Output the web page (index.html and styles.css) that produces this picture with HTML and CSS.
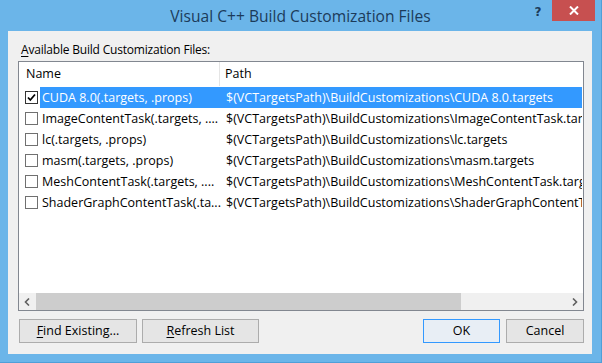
FILE: index.html
```html
<!DOCTYPE html>
<html>
<head>
<meta charset="utf-8">
<link rel="stylesheet" href="styles.css">
</head>
<body>
<div class="window">
  <div class="titlebar">
    <div class="title">Visual C++ Build Customization Files</div>
    <div class="controls">
      <span class="help">?</span>
      <span class="close"><svg width="10" height="9" viewBox="0 0 10 9"><path d="M1 0.5 L9 8.5 M9 0.5 L1 8.5" stroke="#fff" stroke-width="2"/></svg></span>
    </div>
  </div>
  <div class="client">
    <div class="label"><u>A</u>vailable Build Customization Files:</div>
    <div class="listbox">
      <div class="header">
        <div class="col-name">Name</div>
        <div class="col-path">Path</div>
      </div>
      <div class="rows">
        <div class="row selected">
          <span class="cb"><svg width="13" height="13" viewBox="0 0 13 13"><rect x="0.5" y="0.5" width="12" height="12" fill="#fff" stroke="#333"/><path d="M3 6.5 L5.3 9 L10 3.5" fill="none" stroke="#000" stroke-width="1.8"/></svg></span>
          <div class="sel">
            <span class="name">CUDA 8.0(.targets, .props)</span>
            <span class="path">$(VCTargetsPath)\BuildCustomizations\CUDA 8.0.targets</span>
          </div>
        </div>
        <div class="row">
          <span class="cb"><svg width="13" height="13" viewBox="0 0 13 13"><rect x="0.5" y="0.5" width="12" height="12" fill="#fff" stroke="#707070"/></svg></span>
          <div class="sel">
            <span class="name">ImageContentTask(.targets, ....</span>
            <span class="path">$(VCTargetsPath)\BuildCustomizations\ImageContentTask.targets</span>
          </div>
        </div>
        <div class="row">
          <span class="cb"><svg width="13" height="13" viewBox="0 0 13 13"><rect x="0.5" y="0.5" width="12" height="12" fill="#fff" stroke="#707070"/></svg></span>
          <div class="sel">
            <span class="name">lc(.targets, .props)</span>
            <span class="path">$(VCTargetsPath)\BuildCustomizations\lc.targets</span>
          </div>
        </div>
        <div class="row">
          <span class="cb"><svg width="13" height="13" viewBox="0 0 13 13"><rect x="0.5" y="0.5" width="12" height="12" fill="#fff" stroke="#707070"/></svg></span>
          <div class="sel">
            <span class="name">masm(.targets, .props)</span>
            <span class="path">$(VCTargetsPath)\BuildCustomizations\masm.targets</span>
          </div>
        </div>
        <div class="row">
          <span class="cb"><svg width="13" height="13" viewBox="0 0 13 13"><rect x="0.5" y="0.5" width="12" height="12" fill="#fff" stroke="#707070"/></svg></span>
          <div class="sel">
            <span class="name">MeshContentTask(.targets, ....</span>
            <span class="path">$(VCTargetsPath)\BuildCustomizations\MeshContentTask.targets</span>
          </div>
        </div>
        <div class="row">
          <span class="cb"><svg width="13" height="13" viewBox="0 0 13 13"><rect x="0.5" y="0.5" width="12" height="12" fill="#fff" stroke="#707070"/></svg></span>
          <div class="sel">
            <span class="name">ShaderGraphContentTask(.ta...</span>
            <span class="path">$(VCTargetsPath)\BuildCustomizations\ShaderGraphContentTask.targets</span>
          </div>
        </div>
      </div>
      <div class="hscroll">
        <span class="arrow"><svg width="7" height="8" viewBox="0 0 7 8"><path d="M5 0.5 L1.5 4 L5 7.5" fill="none" stroke="#606060" stroke-width="1.6"/></svg></span>
        <div class="track"><div class="thumb"></div></div>
        <span class="arrow"><svg width="7" height="8" viewBox="0 0 7 8"><path d="M2 0.5 L5.5 4 L2 7.5" fill="none" stroke="#606060" stroke-width="1.6"/></svg></span>
      </div>
    </div>
    <div class="buttons">
      <div class="btn find"><u>F</u>ind Existing...</div>
      <div class="btn refresh"><u>R</u>efresh List</div>
      <div class="spacer"></div>
      <div class="btn ok default">OK</div>
      <div class="btn cancel">Cancel</div>
    </div>
  </div>
</div>
</body>
</html>
```
FILE: styles.css
```css
html, body {
  margin: 0;
  padding: 0;
}
body {
  width: 602px;
  height: 363px;
  overflow: hidden;
  font-family: "Open Sans", "Noto Sans", sans-serif;
  font-size: 12px;
  color: #000;
}
.window {
  width: 602px;
  height: 363px;
  box-sizing: border-box;
  background: #6bb5e9;
  border-right: 1px solid #4f9fd8;
  border-bottom: 1px solid #4f9fd8;
  padding: 0 9px 8px 8px;
  display: flex;
  flex-direction: column;
}
.titlebar {
  height: 31px;
  display: flex;
  align-items: flex-start;
  margin: 0 -9px 0 -8px;
  padding-left: 74px;
}
.title {
  flex: 1;
  text-align: center;
  font-size: 15.6px;
  color: #1c3b5a;
  line-height: 33px;
}
.controls {
  width: 74px;
  display: flex;
  align-items: flex-start;
}
.help {
  width: 22px;
  font-family: "DejaVu Sans", sans-serif;
  font-weight: bold;
  font-size: 12px;
  color: #1c3b5a;
  text-align: center;
  padding-top: 5px;
  margin-left: 0;
  margin-right: 3px;
}
.close {
  width: 43px;
  height: 21px;
  background: #c75050;
  display: flex;
  align-items: center;
  justify-content: center;
}
.client {
  flex: 1;
  background: #f0f0f0;
  padding: 0 8px 0 10px;
  display: flex;
  flex-direction: column;
}
.label {
  height: 30px;
  line-height: 18px;
  padding-top: 10px;
  box-sizing: border-box;
  padding-left: 3px;
  letter-spacing: -0.2px;
}
.label u, .btn u {
  text-decoration-thickness: 1px;
  text-underline-offset: 2px;
}
.listbox {
  height: 250px;
  box-sizing: border-box;
  border: 1px solid #828790;
  background: #fff;
  display: flex;
  flex-direction: column;
  overflow: hidden;
}
.header {
  height: 24px;
  display: flex;
  flex: none;
  font-size: 12.5px;
}
.col-name {
  width: 201px;
  border-right: 1px solid #e5e5e5;
  padding-left: 7px;
  box-sizing: border-box;
  line-height: 24px;
}
.col-path {
  padding-left: 5px;
  line-height: 24px;
}
.rows {
  flex: 1;
  padding-top: 1px;
  font-size: 12.5px;
}
.row {
  height: 21px;
  display: flex;
  align-items: center;
  padding-left: 6px;
  white-space: nowrap;
}
.cb {
  width: 15px;
  height: 13px;
  flex: none;
  display: flex;
}
.sel {
  height: 21px;
  display: flex;
  align-items: center;
  width: 542px;
  overflow: hidden;
  padding-left: 2px;
  box-sizing: border-box;
}
.row.selected .sel {
  background: #3399ff;
  color: #fff;
}
.name {
  width: 184px;
  flex: none;
  overflow: hidden;
}
.path {
  flex: none;
}
.hscroll {
  height: 17px;
  flex: none;
  display: flex;
  background: #f0f0f0;
}
.arrow {
  width: 17px;
  height: 17px;
  display: flex;
  align-items: center;
  justify-content: center;
  flex: none;
}
.track {
  flex: 1;
  display: flex;
  align-items: stretch;
}
.thumb {
  width: 425px;
  background: #cdcdcd;
}
.buttons {
  display: flex;
  margin-top: 8px;
  padding-left: 1px;
  gap: 5px;
}
.btn {
  height: 24px;
  box-sizing: border-box;
  border: 1px solid #acacac;
  background: #e5e5e5;
  text-align: center;
  line-height: 22px;
  font-size: 12.5px;
}
.find { width: 118px; }
.refresh { width: 117px; }
.spacer { flex: 1; }
.ok { width: 77px; }
.cancel { width: 78px; margin-left: 1px; }
.btn.default {
  border-color: #3399ff;
  background: #e8eef5;
}
```
